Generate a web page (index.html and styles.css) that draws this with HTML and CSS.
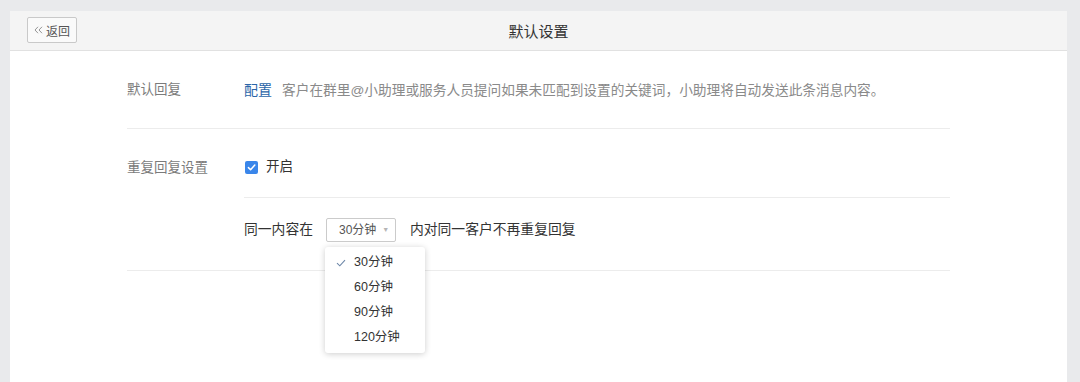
FILE: index.html
```html
<!DOCTYPE html>
<html lang="zh-CN">
<head>
<meta charset="utf-8">
<title>默认设置</title>
<link rel="stylesheet" href="styles.css">
</head>
<body>
<div class="card">
  <div class="header">
    <div class="header-left"><button class="back"><svg class="dbl" width="9" height="8" viewBox="0 0 9 8"><path d="M4 0.8 L1 4 L4 7.2 M8 0.8 L5 4 L8 7.2" fill="none" stroke="#8a8a8a" stroke-width="0.9"/></svg>返回</button></div>
    <div class="title">默认设置</div>
    <div class="header-right"></div>
  </div>
  <div class="content">
    <div class="row row-first">
      <div class="label">默认回复</div>
      <div class="value">
        <span class="link">配置</span><span class="desc">客户在群里@小助理或服务人员提问如果未匹配到设置的关键词，小助理将自动发送此条消息内容。</span>
      </div>
    </div>
    <div class="row">
      <div class="label label-top">重复回复设置</div>
      <div class="value value-stack">
        <div class="line line-check">
          <span class="checkbox"><svg width="9" height="9" viewBox="0 0 9 9"><path d="M1.4 4.6 L3.6 6.8 L7.8 2.0" fill="none" stroke="#fff" stroke-width="1.5" stroke-linecap="round" stroke-linejoin="round"/></svg></span>
          <span class="check-text">开启</span>
        </div>
        <div class="line line-select">
          <span class="plain">同一内容在</span>
          <div class="select-wrap">
            <div class="select"><span>30分钟</span><span class="arrow">&#9660;</span></div>
            <ul class="menu">
              <li class="selected"><svg class="tick" width="10" height="8" viewBox="0 0 10 8"><path d="M1 4.2 L3.8 6.8 L9 1.2" fill="none" stroke="#6d87a8" stroke-width="1.1"/></svg>30分钟</li>
              <li>60分钟</li>
              <li>90分钟</li>
              <li>120分钟</li>
            </ul>
          </div>
          <span class="plain">内对同一客户不再重复回复</span>
        </div>
      </div>
    </div>
  </div>
</div>
</body>
</html>
```

FILE: styles.css
```css
* { box-sizing: border-box; }
html, body { margin: 0; padding: 0; }
body {
  background: #e9eaec;
  padding: 11px 13px 0 10px;
  height: 382px;
  overflow: hidden;
  font-family: "Liberation Sans", "Noto Sans CJK SC", sans-serif;
  font-size: 14px;
  color: #333;
}
.card {
  background: #fff;
  height: 371px;
}
.header {
  display: grid;
  grid-template-columns: 1fr auto 1fr;
  align-items: center;
  height: 40px;
  background: #f4f4f4;
  border-bottom: 1px solid #e1e1e1;
}
.header-left {
  padding-left: 17px;
}
.back {
  display: flex;
  align-items: center;
  height: 26px;
  width: 50px;
  padding: 0 0 0 6px;
  border: 1px solid #c9c9c9;
  border-radius: 2px;
  background: #fafafa;
  color: #555;
  font-family: inherit;
  font-size: 12px;
  margin-top: -1px;
}
.dbl {
  margin-right: 3px;
}
.title {
  font-size: 15px;
  color: #333;
}
.content {
  padding: 0 117px;
}
.row {
  display: flex;
  border-bottom: 1px solid #ececec;
}
.row-first {
  padding: 29px 0 27px;
}
.label {
  width: 117px;
  flex: none;
  line-height: 20px;
  color: #7b7b7b;
  font-size: 13.5px;
}
.label-top {
  padding-top: 29px;
}
.value {
  flex: 1;
  line-height: 20px;
}
.link {
  color: #2b66a8;
  margin-right: 10px;
}
.desc {
  color: #8a8a8a;
  font-size: 13.7px;
}
.value-stack {
  display: flex;
  flex-direction: column;
}
.line {
  display: flex;
  align-items: center;
}
.line-check {
  padding: 28px 0 20px;
  border-bottom: 1px solid #ececec;
  height: 69px;
}
.checkbox {
  width: 13px;
  height: 13px;
  border-radius: 2px;
  background: #3a86ea;
  display: flex;
  align-items: center;
  justify-content: center;
  margin: 0 8px 0 1px;
}
.check-text { color: #333; font-size: 13.5px; }
.line-select {
  padding: 19px 0 28px;
  height: 72px;
}
.plain { color: #333; font-size: 13.8px; }
.select-wrap {
  position: relative;
  margin: 0 14px 0 13px;
}
.select {
  width: 70px;
  height: 24px;
  border: 1px solid #cbcbcb;
  border-radius: 2px;
  display: flex;
  align-items: center;
  padding-left: 12px;
  font-size: 12px;
  color: #555;
}
.arrow {
  font-size: 7px;
  color: #b5b5b5;
  margin-left: 6px;
}
.menu {
  position: absolute;
  left: -1px;
  top: 29px;
  width: 100px;
  margin: 0;
  padding: 3px 0 2px;
  list-style: none;
  background: #fff;
  border-radius: 3px;
  box-shadow: 0 1px 6px rgba(0, 0, 0, 0.2);
  z-index: 2;
}
.menu li {
  position: relative;
  height: 25.33px;
  line-height: 25.33px;
  padding-left: 29px;
  font-size: 12.5px;
  color: #333;
}
.tick {
  position: absolute;
  left: 11px;
  top: 9px;
}
```
